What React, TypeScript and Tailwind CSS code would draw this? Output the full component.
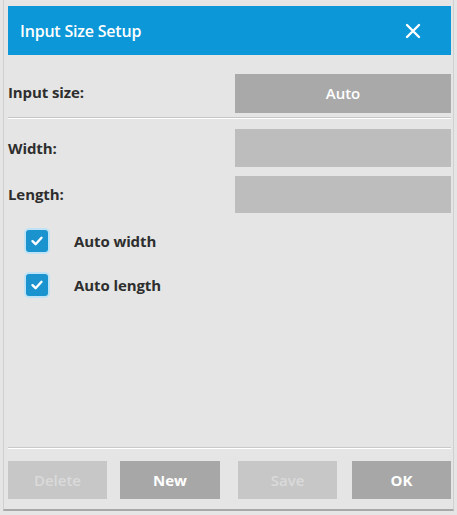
import React from "react";

function Check() {
  return (
    <div className="w-[22px] h-[22px] rounded-[3px] bg-[#1a93cf] flex items-center justify-center shadow-[0_0_0_2px_#bfe3f5]">
      <svg width="14" height="14" viewBox="0 0 14 14">
        <path d="M2.5 7.2 L5.6 10.2 L11.5 3.8" fill="none" stroke="white" strokeWidth="2.4" strokeLinecap="round" strokeLinejoin="round" />
      </svg>
    </div>
  );
}

export default function App() {
  return (
    <div
      className="w-[457px] h-[515px] bg-[#e5e5e5] flex flex-col text-[#2e2e2e]"
      style={{ fontFamily: '"Open Sans", "Noto Sans", sans-serif' }}
    >
      <div className="flex flex-col flex-1 ml-[3px] mr-[3px] border-l border-[#d0d0d0] border-r mb-[4px] border-b-2 border-b-[#a8a8a8]">
        <div className="mt-[6px] ml-[4px] mr-[2px] h-[49px] bg-[#0b97d8] flex items-center justify-between pl-[12px] pr-[30px]">
          <span className="text-white text-[16px] font-semibold tracking-[-0.2px]">Input Size Setup</span>
          <svg width="16" height="16" viewBox="0 0 16 16">
            <path d="M2 2 L14 14 M14 2 L2 14" stroke="white" strokeWidth="2.4" strokeLinecap="round" />
          </svg>
        </div>

        <div className="flex items-center justify-between pl-[4px] pr-[2px] mt-[19px]">
          <span className="text-[15px] font-bold tracking-[-0.1px] -mt-[3px]">Input size:</span>
          <div className="w-[216px] h-[39px] bg-[#a9a9a9] flex items-center justify-center text-white text-[15px] font-semibold">
            Auto
          </div>
        </div>

        <div className="mt-[4px] ml-[4px] mr-[2px] h-[2px] bg-[#c6c6c6] border-b border-white" />

        <div className="flex items-center justify-between pl-[4px] pr-[2px] mt-[10px]">
          <span className="text-[15px] font-bold tracking-[-0.1px]">Width:</span>
          <div className="w-[216px] h-[38px] bg-[#bdbdbd]" />
        </div>
        <div className="flex items-center justify-between pl-[4px] pr-[2px] mt-[9px]">
          <span className="text-[15px] font-bold tracking-[-0.1px]">Length:</span>
          <div className="w-[216px] h-[37px] bg-[#bdbdbd]" />
        </div>

        <div className="flex items-center mt-[17px] pl-[22px]">
          <Check />
          <span className="ml-[26px] text-[15px] font-bold tracking-[-0.1px]">Auto width</span>
        </div>
        <div className="flex items-center mt-[21px] pl-[22px]">
          <Check />
          <span className="ml-[26px] text-[15px] font-bold tracking-[-0.1px]">Auto length</span>
        </div>

        <div className="flex-1" />

        <div className="ml-[4px] mr-[2px] h-[2px] bg-[#c9c9c9] border-b border-white" />

        <div className="flex pl-[4px] mt-[12px] mb-[10px] text-[15px] font-bold">
          <div className="w-[99px] h-[38px] bg-[#c7c7c7] text-[#dadada] flex items-center justify-center font-semibold">Delete</div>
          <div className="w-[100px] h-[38px] ml-[13px] bg-[#a7a7a7] text-white flex items-center justify-center">New</div>
          <div className="w-[99px] h-[38px] ml-[18px] bg-[#c7c7c7] text-[#dadada] flex items-center justify-center font-semibold">Save</div>
          <div className="w-[99px] h-[38px] ml-[15px] bg-[#a7a7a7] text-white flex items-center justify-center">OK</div>
        </div>
      </div>
    </div>
  );
}
